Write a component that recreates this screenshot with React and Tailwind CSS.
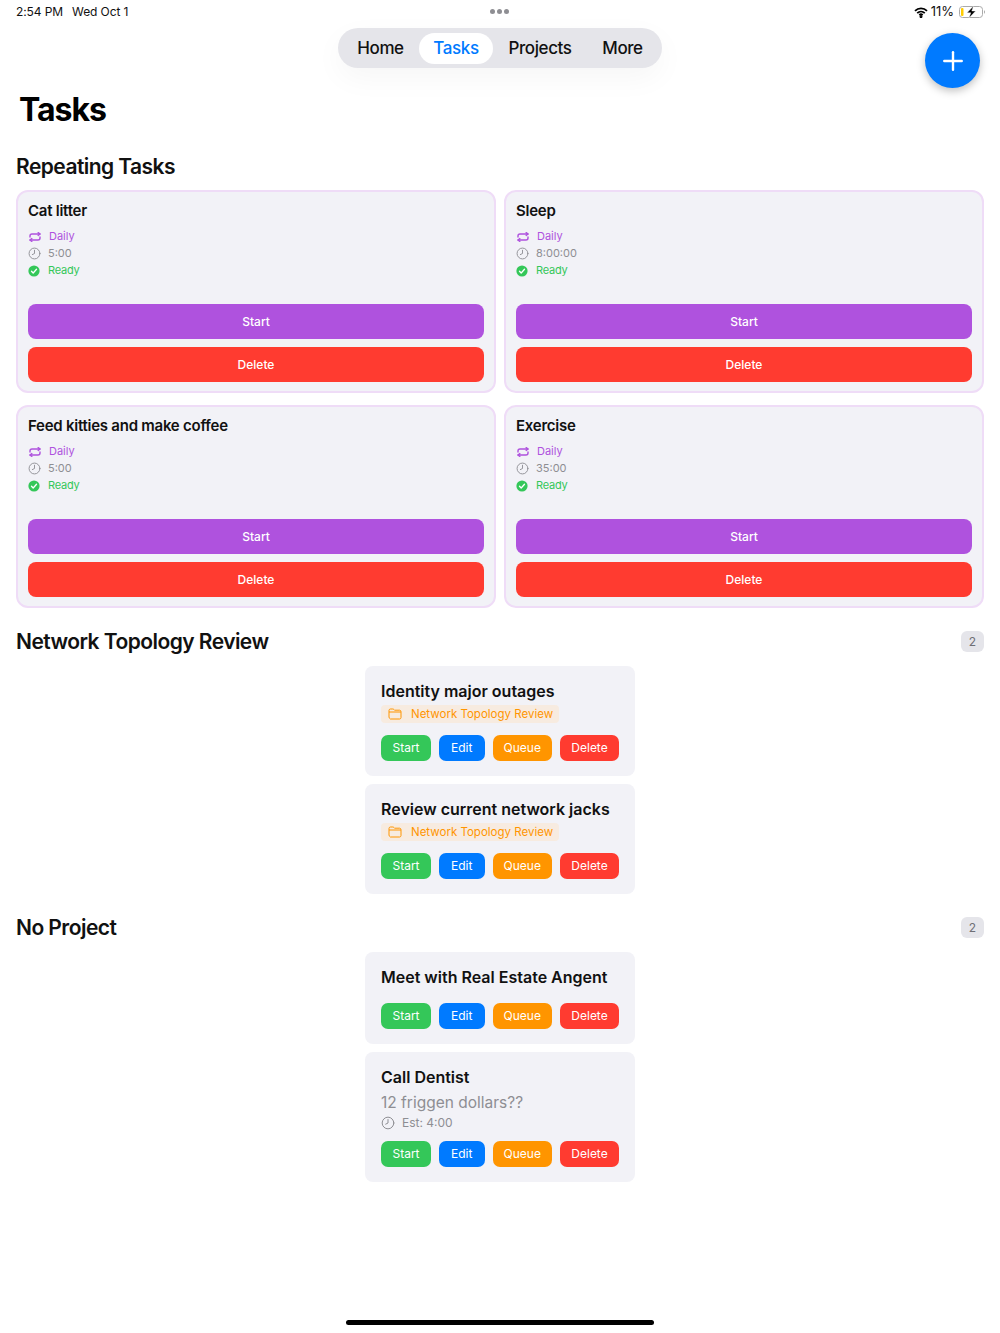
import React from "react";
import { Clock8, Plus } from "lucide-react";

const repeating = [
  { name: "Cat litter", time: "5:00" },
  { name: "Sleep", time: "8:00:00" },
  { name: "Feed kitties and make coffee", time: "5:00" },
  { name: "Exercise", time: "35:00" },
];

const groups = [
  {
    title: "Network Topology Review",
    tasks: [
      { name: "Identity major outages", project: "Network Topology Review" },
      { name: "Review current network jacks", project: "Network Topology Review" },
    ],
  },
  {
    title: "No Project",
    tasks: [
      { name: "Meet with Real Estate Angent" },
      { name: "Call Dentist", note: "12 friggen dollars??", est: "Est: 4:00" },
    ],
  },
];

function RepeatIcon() {
  return (
    <svg width="12" height="10" viewBox="0 0 12 10" fill="none" stroke="#af52de" strokeWidth="1.4" strokeLinecap="round" strokeLinejoin="round" className="ml-[1px] shrink-0">
      <path d="M1 5V4a2 2 0 0 1 2-2h8" />
      <path d="M9.2 0.6 11 2 9.2 3.4" />
      <path d="M11 5v1a2 2 0 0 1-2 2H1" />
      <path d="M2.8 6.6 1 8l1.8 1.4" />
    </svg>
  );
}

function CheckCircle() {
  return (
    <svg width="12" height="12" viewBox="0 0 12 12" className="shrink-0">
      <circle cx="6" cy="6" r="5.6" fill="#34c759" />
      <path d="M3.5 6.2 5.2 8 8.5 4.3" fill="none" stroke="#fff" strokeWidth="1.3" strokeLinecap="round" strokeLinejoin="round" />
    </svg>
  );
}

function FolderIcon() {
  return (
    <svg width="14" height="12" viewBox="0 0 14 12" fill="none" stroke="#ff9500" strokeWidth="1" className="shrink-0">
      <path d="M1 3V2.4C1 1.6 1.6 1 2.4 1h2.4c.5 0 .8.2 1.1.5l.6.7h5.1c.8 0 1.4.6 1.4 1.4v6c0 .8-.6 1.4-1.4 1.4H2.4C1.6 10.5 1 9.9 1 9.1V3Z" />
      <path d="M1 4h12" />
    </svg>
  );
}

function StatusBar() {
  return (
    <div className="relative h-[24px] flex items-center justify-between pl-[16px] pr-[15px] text-[12px] text-[#111]">
      <div className="flex gap-[9px] tracking-[-0.1px]">
        <span>2:54 PM</span>
        <span>Wed Oct 1</span>
      </div>
      <div className="absolute left-[490px] top-[9px] flex gap-[2px]">
        <span className="w-[5px] h-[5px] rounded-full bg-[#8e8e93]" />
        <span className="w-[5px] h-[5px] rounded-full bg-[#8e8e93]" />
        <span className="w-[5px] h-[5px] rounded-full bg-[#8e8e93]" />
      </div>
      <div className="flex items-center gap-[5px]">
        <svg width="14" height="11" viewBox="0 0 14 11" fill="none" stroke="#000" strokeWidth="1.8" className="-mr-[2px]">
          <path d="M1 3.9a8.6 8.6 0 0 1 12 0" />
          <path d="M3.2 6.1a5.5 5.5 0 0 1 7.6 0" />
          <path d="M5.3 8.1a2.5 2.5 0 0 1 3.4 0" />
          <circle cx="7" cy="9.6" r="0.6" fill="#000" />
        </svg>
        <span className="text-[13px]">11%</span>
        <svg width="26" height="12" viewBox="0 0 26 12">
          <rect x="0.5" y="0.5" width="23" height="11" rx="3" fill="none" stroke="#aaa" />
          <rect x="2" y="2" width="2.5" height="8" rx="1" fill="#ffcc00" />
          <path d="M25 4.2v3.6c.6-.2 1-1 1-1.8s-.4-1.6-1-1.8Z" fill="#aaa" />
          <path d="M14.5 0 8 6.8h3.8L10 12l6.6-7h-3.8L14.5 0Z" fill="#000" stroke="#fff" strokeWidth="0.4" />
        </svg>
      </div>
    </div>
  );
}

function Nav() {
  return (
    <div className="flex justify-center mt-[4px]">
      <div className="w-[324px] h-[40px] rounded-full bg-[#e5e5ea] flex items-center pl-[5px] text-[17px] tracking-[-0.4px] font-medium text-[#111] shadow-[0_10px_30px_rgba(0,0,0,0.04)]">
        <span className="w-[75px] pt-[2px] text-center">Home</span>
        <span className="w-[74px] h-[31px] ml-[1px] pt-[2px] flex items-center justify-center rounded-full bg-white text-[#007aff]">Tasks</span>
        <span className="w-[94px] pt-[2px] text-center">Projects</span>
        <span className="w-[71px] pt-[2px] text-center">More</span>
      </div>
    </div>
  );
}

function RepeatingCard({ task }) {
  return (
    <div className="h-[203px] rounded-[12px] border-2 border-[#efdcf7] bg-[#f2f2f7] px-[10px] pt-[9px]">
      <div className="h-[20px] leading-[20px] text-[15px] tracking-[-0.25px] font-semibold text-[#111]">{task.name}</div>
      <div className="mt-[7px] text-[11px] leading-[17px]">
        <div className="flex items-center text-[#af52de]">
          <RepeatIcon />
          <span className="ml-[8px]">Daily</span>
        </div>
        <div className="flex items-center text-[#8e8e93]">
          <Clock8 size={13} strokeWidth={1.7} className="shrink-0" />
          <span className="ml-[7px]">{task.time}</span>
        </div>
        <div className="flex items-center text-[#34c759]">
          <CheckCircle />
          <span className="ml-[8px] tracking-[-0.2px]">Ready</span>
        </div>
      </div>
      <button className="block w-full h-[35px] mt-[25px] rounded-[8px] bg-[#af52de] text-white text-[12px] font-medium">Start</button>
      <button className="block w-full h-[35px] mt-[8px] rounded-[8px] bg-[#ff3b30] text-white text-[12px] font-medium">Delete</button>
    </div>
  );
}

function TaskCard({ task }) {
  return (
    <div className="w-[270px] rounded-[8px] bg-[#f2f2f7] px-[16px] pt-[14px] pb-[15px]">
      <div className="h-[22px] leading-[22px] text-[16px] font-semibold text-[#111] whitespace-nowrap">{task.name}</div>
      {task.project && (
        <div className="mt-[3px] w-[178px] h-[18px] rounded-[4px] bg-[#f7ebe0] flex items-center pl-[7px] text-[11.5px] text-[#ff9500] whitespace-nowrap">
          <FolderIcon />
          <span className="ml-[9px] pt-[2px]">{task.project}</span>
        </div>
      )}
      {task.note && <div className="mt-[4px] h-[22px] leading-[22px] text-[15.5px] text-[#8e8e93]">{task.note}</div>}
      {task.est && (
        <div className="h-[17px] flex items-center text-[12px] text-[#8e8e93]">
          <Clock8 size={14} strokeWidth={1.7} className="shrink-0" />
          <span className="ml-[7px]">{task.est}</span>
        </div>
      )}
      <div className={`flex gap-[8px] text-[12px] text-white ${task.est ? "mt-[10px]" : task.project ? "mt-[12px]" : "mt-[15px]"}`}>
        <button className="w-[50px] h-[26px] rounded-[7px] bg-[#34c759]">Start</button>
        <button className="w-[45.5px] h-[26px] rounded-[7px] bg-[#007aff]">Edit</button>
        <button className="w-[59.5px] h-[26px] rounded-[7px] bg-[#ff9500]">Queue</button>
        <button className="w-[59px] h-[26px] rounded-[7px] bg-[#ff3b30]">Delete</button>
      </div>
    </div>
  );
}

export default function App() {
  return (
    <div className="relative w-[1000px] min-h-[1333px] flex flex-col bg-white font-['Inter',sans-serif]">
      <StatusBar />
      <Nav />

      <button className="absolute left-[925px] top-[33px] w-[55px] h-[55px] rounded-full bg-[#007aff] text-white flex items-center justify-center shadow-[0_3px_8px_rgba(0,0,0,0.25)]">
        <Plus size={30} strokeWidth={1.9} />
      </button>

      <h1 className="mt-[21px] ml-[19px] h-[42px] leading-[42px] text-[32px] tracking-[-1px] font-bold text-black">Tasks</h1>

      <div className="px-[16px]">
        <h2 className="mt-[21px] mb-[11px] h-[27px] leading-[29px] text-[21px] tracking-[-0.55px] font-semibold text-[#111]">Repeating Tasks</h2>
        <div className="grid grid-cols-2 gap-x-[8px] gap-y-[12px]">
          {repeating.map((task) => (
            <RepeatingCard key={task.name} task={task} />
          ))}
        </div>

        {groups.map((group) => (
          <section key={group.title}>
            <div className="mt-[21px] mb-[12px] h-[25px] flex items-center justify-between">
              <h2 className="text-[21px] tracking-[-0.55px] font-semibold text-[#111]">{group.title}</h2>
              <span className="w-[23px] h-[21px] rounded-[6px] bg-[#e5e5ea] flex items-center justify-center text-[12px] text-[#6f6f75]">2</span>
            </div>
            <div className="flex flex-col items-center gap-[8px]">
              {group.tasks.map((task) => (
                <TaskCard key={task.name} task={task} />
              ))}
            </div>
          </section>
        ))}
      </div>

      <div className="mt-auto mb-[8px] mx-auto w-[308px] h-[5px] rounded-full bg-black" />
    </div>
  );
}
